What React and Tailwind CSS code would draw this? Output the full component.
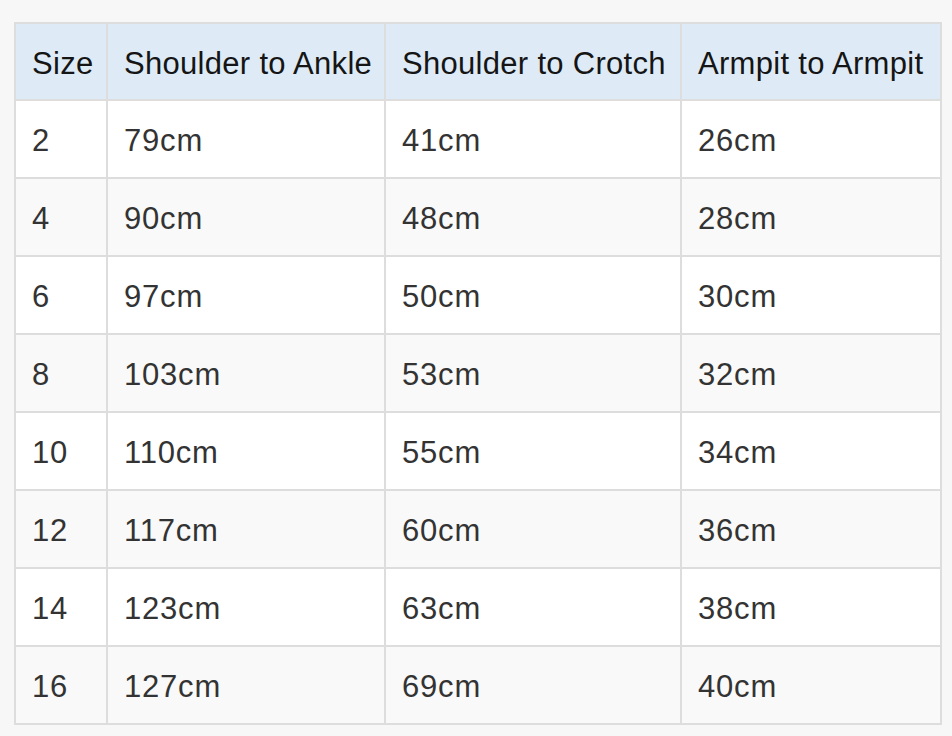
export default function App() {
  const head = ["Size", "Shoulder to Ankle", "Shoulder to Crotch", "Armpit to Armpit"];
  const rows = [
    ["2", "79cm", "41cm", "26cm"],
    ["4", "90cm", "48cm", "28cm"],
    ["6", "97cm", "50cm", "30cm"],
    ["8", "103cm", "53cm", "32cm"],
    ["10", "110cm", "55cm", "34cm"],
    ["12", "117cm", "60cm", "36cm"],
    ["14", "123cm", "63cm", "38cm"],
    ["16", "127cm", "69cm", "40cm"],
  ];
  return (
    <div className="w-[952px] h-[736px] bg-[#f7f7f7] pt-[22px] pl-[14px]" style={{ fontFamily: '"Liberation Sans", Arial, sans-serif' }}>
      <div className="w-[928px] border-l-2 border-t-2 border-[#dddddd] grid grid-cols-[92px_278px_296px_260px] text-[31px]">
        {head.map((h, i) => (
          <div key={i} className="h-[77px] bg-[#deebf7] border-r-2 border-b-2 border-[#dddddd] flex items-center pl-4 pt-[5px] text-[#151515] tracking-[0.3px] whitespace-nowrap">
            {h}
          </div>
        ))}
        {rows.map((r, ri) =>
          r.map((c, ci) => (
            <div
              key={ri + "-" + ci}
              className={`h-[78px] border-r-2 border-b-2 border-[#dddddd] flex items-center pl-4 pt-[5px] text-[#333333] tracking-[0.8px] ${ri % 2 === 0 ? "bg-white" : "bg-[#f9f9f9]"}`}
            >
              {c}
            </div>
          ))
        )}
      </div>
    </div>
  );
}
